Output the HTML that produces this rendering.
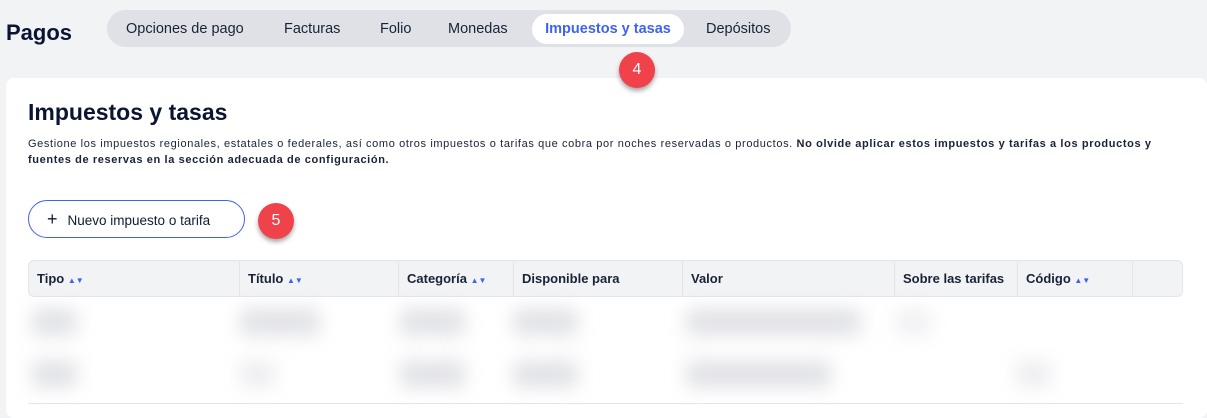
<!DOCTYPE html>
<html><head><meta charset="utf-8"><style>
*{box-sizing:border-box;margin:0;padding:0}
body{width:1207px;height:407px;overflow:hidden;background:#f2f3f5;font-family:"Liberation Sans",sans-serif;color:#0f1a33;position:relative}
.abs{position:absolute}
.title{left:6px;top:20px;font-size:22px;font-weight:bold;color:#0c1433}
.tabs{left:107px;top:10px;width:684px;height:37px;background:#dfe1e6;border-radius:19px}
.tab{position:absolute;top:1px;height:37px;line-height:37px;font-size:14.5px;color:#1a2238}
.act{top:4px;height:30px;line-height:31px;background:#fff;border-radius:15px;color:#3e63f0;left:425px;width:152px;text-align:center;font-weight:bold}
.badge{width:36px;height:36px;border-radius:50%;background:#f0424a;color:#fff;font-size:16px;text-align:center;line-height:36px;box-shadow:0 3px 5px rgba(0,0,0,.35)}
.card{left:6px;top:78px;width:1201px;height:340px;background:#fff;border-radius:8px}
h1{position:absolute;left:28px;top:99px;font-size:23px;font-weight:bold;color:#0c1433}
.desc{left:28px;top:136px;width:1170px;font-size:11px;line-height:16px;color:#1a2238;letter-spacing:0.62px;white-space:nowrap}
.btn{left:28px;top:200px;width:217px;height:38px;border:1px solid #3e63f0;border-radius:19px;font-size:13.5px;line-height:36px;padding-left:18px;color:#0f1a33}
.th{left:28px;top:260px;width:1155px;height:37px;background:#f2f3f5;border:1px solid #e3e5ea;border-radius:6px}
.col{position:absolute;top:0;height:35px;line-height:35px;font-size:13px;font-weight:bold;padding-left:8px;border-left:1px solid #e3e5ea;color:#1a2238}
.s{color:#3e63f0;font-size:8px}
.b{position:absolute;background:#e2e3e7;filter:blur(9px);border-radius:6px}
</style></head><body>
<div class="abs title">Pagos</div>
<div class="abs tabs">
<div class="tab" style="left:19px">Opciones de pago</div>
<div class="tab" style="left:177px">Facturas</div>
<div class="tab" style="left:273px">Folio</div>
<div class="tab" style="left:341px">Monedas</div>
<div class="tab act">Impuestos y tasas</div>
<div class="tab" style="left:599px">Depósitos</div>
</div>
<div class="abs card"></div>
<div class="abs badge" style="left:619px;top:52px">4</div>
<h1>Impuestos y tasas</h1>
<div class="abs desc">Gestione los impuestos regionales, estatales o federales, así como otros impuestos o tarifas que cobra por noches reservadas o productos. <b>No olvide aplicar estos impuestos y tarifas a los productos y<br>fuentes de reservas en la sección adecuada de configuración.</b></div>
<div class="abs btn"><span style="font-size:18px;margin-right:10px">+</span>Nuevo impuesto o tarifa</div>
<div class="abs badge" style="left:258px;top:203px">5</div>
<div class="abs th">
<div class="col" style="left:0;border:none">Tipo <span class="s">▲▼</span></div>
<div class="col" style="left:210px">Título <span class="s">▲▼</span></div>
<div class="col" style="left:369px">Categoría <span class="s">▲▼</span></div>
<div class="col" style="left:484px">Disponible para</div>
<div class="col" style="left:653px">Valor</div>
<div class="col" style="left:865px">Sobre las tarifas</div>
<div class="col" style="left:988px">Código <span class="s">▲▼</span></div>
<div class="col" style="left:1103px;width:52px"></div>
</div>
<div class="b" style="left:32px;top:308px;width:45px;height:28px"></div>
<div class="b" style="left:240px;top:308px;width:80px;height:28px"></div>
<div class="b" style="left:400px;top:308px;width:65px;height:28px"></div>
<div class="b" style="left:513px;top:308px;width:65px;height:28px"></div>
<div class="b" style="left:686px;top:308px;width:175px;height:28px"></div>
<div class="b" style="left:896px;top:308px;width:35px;height:28px;opacity:.5"></div>
<div class="b" style="left:32px;top:360px;width:45px;height:28px"></div>
<div class="b" style="left:240px;top:360px;width:35px;height:28px;opacity:.6"></div>
<div class="b" style="left:400px;top:360px;width:65px;height:28px"></div>
<div class="b" style="left:513px;top:360px;width:65px;height:28px"></div>
<div class="b" style="left:686px;top:360px;width:145px;height:28px"></div>
<div class="b" style="left:1016px;top:360px;width:35px;height:28px;opacity:.6"></div>
<div class="abs" style="left:28px;top:403px;width:1155px;height:1px;background:#e3e5ea"></div>
</body></html>
